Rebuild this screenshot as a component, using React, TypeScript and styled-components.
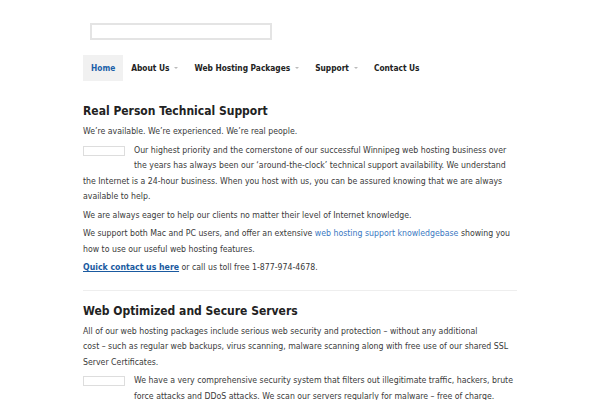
import React from "react";
import styled, { createGlobalStyle } from "styled-components";

const Global = createGlobalStyle`
  html, body { margin: 0; padding: 0; background: #fff; }
  body { font-family: "DejaVu Sans Condensed", "DejaVu Sans", Verdana, sans-serif; font-stretch: condensed; color: #333; }
`;

const Page = styled.div`
  width: 434px;
  margin-left: 83px;
`;

const Header = styled.header`
  padding: 23px 0 15px 7px;
`;

const SearchBox = styled.input`
  display: block;
  box-sizing: border-box;
  width: 182px;
  height: 17px;
  border: 2px solid #e4e4e4;
  background: #fff;
  padding: 0;
  outline: none;
`;

const Nav = styled.nav`
  display: flex;
  align-items: stretch;
  height: 26px;
`;

const NavItem = styled.a<{ $active?: boolean }>`
  display: flex;
  align-items: center;
  gap: 5px;
  padding: 0 8px;
  font-size: 8.3px;
  font-weight: bold;
  color: ${(p) => (p.$active ? "#1a5fa8" : "#222")};
  background: ${(p) => (p.$active ? "#f1f1f1" : "transparent")};
  text-decoration: none;
`;

const Caret = styled.span`
  display: inline-block;
  width: 0;
  height: 0;
  border-left: 2px solid transparent;
  border-right: 2px solid transparent;
  border-top: 2px solid #bbb;
`;

const Main = styled.main`
  padding-top: 21px;
`;

const Section = styled.section`
  & + & {
    border-top: 1px solid #eee;
    margin-top: 14px;
    padding-top: 11px;
  }
`;

const Heading = styled.h2`
  margin: 0 0 4px;
  font-size: 12px;
  line-height: 18px;
  font-weight: bold;
  color: #222;
`;

const Para = styled.p`
  margin: 0 0 3px;
  font-size: 8.7px;
  line-height: 15.5px;
  color: #3a3a3a;
`;

const Thumb = styled.span`
  float: left;
  box-sizing: border-box;
  width: 42px;
  height: 10px;
  margin: 3px 9px 15px 0;
  border: 1px solid #ddd;
`;

const Link = styled.a<{ $strong?: boolean }>`
  text-decoration: ${(p) => (p.$strong ? "underline" : "none")};
  font-weight: ${(p) => (p.$strong ? "bold" : "normal")};
  color: ${(p) => (p.$strong ? "#1a5aa0" : "#3a78c2")};
`;

export default function App() {
  return (
    <>
      <Global />
      <Page>
        <Header>
          <SearchBox type="text" aria-label="Search" />
        </Header>
        <Nav>
          <NavItem $active>Home</NavItem>
          <NavItem>About Us <Caret /></NavItem>
          <NavItem>Web Hosting Packages <Caret /></NavItem>
          <NavItem>Support <Caret /></NavItem>
          <NavItem>Contact Us</NavItem>
        </Nav>
        <Main>
          <Section>
            <Heading>Real Person Technical Support</Heading>
            <Para>We’re available. We’re experienced. We’re real people.</Para>
            <Para>
              <Thumb />
              Our highest priority and the cornerstone of our successful Winnipeg web hosting business over the years has always been our ‘around-the-clock’ technical support availability. We understand the Internet is a 24-hour business. When you host with us, you can be assured knowing that we are always available to help.
            </Para>
            <Para>We are always eager to help our clients no matter their level of Internet knowledge.</Para>
            <Para>
              We support both Mac and PC users, and offer an extensive <Link>web hosting support knowledgebase</Link> showing you how to use our useful web hosting features.
            </Para>
            <Para>
              <Link $strong>Quick contact us here</Link> or call us toll free 1-877-974-4678.
            </Para>
          </Section>
          <Section>
            <Heading>Web Optimized and Secure Servers</Heading>
            <Para>
              All of our web hosting packages include serious web security and protection – without any additional
              <br />
              cost – such as regular web backups, virus scanning, malware scanning along with free use of our shared SSL Server Certificates.
            </Para>
            <Para>
              <Thumb />
              We have a very comprehensive security system that filters out illegitimate traffic, hackers, brute force attacks and DDoS attacks. We scan our servers regularly for malware – free of charge.
              <br />
              We audit our servers for various web applications, configurations and patches. We actively run security checks and monitor our servers around the clock.
            </Para>
          </Section>
        </Main>
      </Page>
    </>
  );
}
